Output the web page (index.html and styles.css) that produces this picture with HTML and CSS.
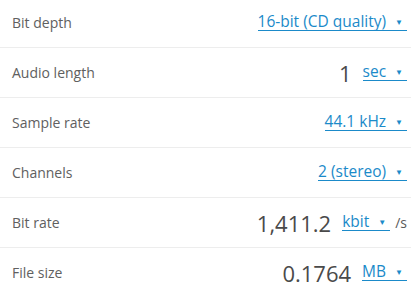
FILE: index.html
```html
<!DOCTYPE html>
<html lang="en">
<head>
  <meta charset="UTF-8">
  <meta name="viewport" content="width=device-width, initial-scale=1.0">
  <title>Audio file size</title>
  <link rel="stylesheet" href="styles.css">
</head>
<body>
  <div class="calc">
    <div class="row">
      <span class="label">Bit depth</span>
      <span class="value"><a class="unit" href="#">16-bit (CD quality)<span class="arrow">▼</span></a></span>
    </div>
    <div class="row">
      <span class="label">Audio length</span>
      <span class="value"><span class="num">1</span><a class="unit" href="#">sec<span class="arrow">▼</span></a></span>
    </div>
    <div class="row">
      <span class="label">Sample rate</span>
      <span class="value"><a class="unit" href="#">44.1 kHz<span class="arrow">▼</span></a></span>
    </div>
    <div class="row">
      <span class="label">Channels</span>
      <span class="value"><a class="unit" href="#">2 (stereo)<span class="arrow">▼</span></a></span>
    </div>
    <div class="row">
      <span class="label">Bit rate</span>
      <span class="value"><span class="num">1,411.2</span><a class="unit" href="#">kbit<span class="arrow">▼</span></a><span class="suffix">/s</span></span>
    </div>
    <div class="row">
      <span class="label">File size</span>
      <span class="value"><span class="num">0.1764</span><a class="unit" href="#">MB<span class="arrow">▼</span></a></span>
    </div>
  </div>
</body>
</html>
```

FILE: styles.css
```css
body {
  margin:0; padding:0;
  font-family: "Open Sans", "Noto Sans", sans-serif;
  background:#fff; color:#5a5a5a;
}
.calc { display:flex; flex-direction:column; margin-top:-2px; }
.row {
  display:flex; justify-content:space-between; align-items:center;
  height:49px; padding:0 4px 0 12px;
  border-bottom:1px solid #ededed;
}
.label { font-size:14px; color:#606060; }
.value { display:flex; align-items:center; gap:11px; }
.num { font-size:22px; color:#4a4a4a; }
.unit {
  display:inline-flex; align-items:center;
  font-size:15.5px; line-height:1; color:#1b8ac9;
  text-decoration:none; white-space:nowrap;
  border-bottom:1px solid #1b8ac9;
}
.arrow { font-size:8px; margin:0 4px 0 9px; }
.suffix { font-size:14px; color:#5a5a5a; margin-left:-6px; }
```
